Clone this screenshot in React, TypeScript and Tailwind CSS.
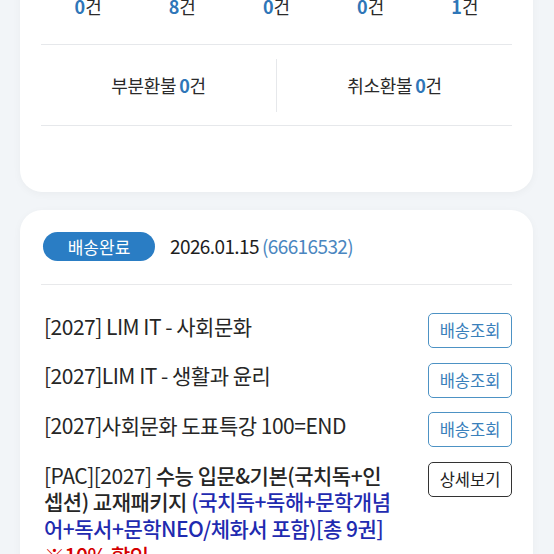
import React from "react";

const FONT = { fontFamily: '"Noto Sans CJK KR", "Noto Sans", sans-serif' };

const COUNTS = [
  { label: "입금대기", n: 0 },
  { label: "결제완료", n: 8 },
  { label: "배송준비", n: 0 },
  { label: "배송중", n: 0 },
  { label: "배송완료", n: 1 },
];

function TrackButton({ label, dark }: { label: string; dark?: boolean }) {
  return (
    <button
      type="button"
      className={
        dark
          ? "shrink-0 h-[35px] w-[84px] whitespace-nowrap rounded-[5px] border-[1.5px] border-[#333] bg-white text-[16.5px] leading-none text-[#222]"
          : "shrink-0 h-[35px] w-[84px] whitespace-nowrap rounded-[5px] border-[1.5px] border-[#4d92c4] bg-white text-[16.5px] leading-none text-[#3a80bb]"
      }
    >
      {label}
    </button>
  );
}

export default function App() {
  return (
    <div style={FONT} className="h-[554px] w-[554px] overflow-hidden bg-[#f2f5f8] text-[#222]">
      <div className="-mt-[48px] flex flex-col gap-[18px] pl-[20px] pr-[21px]">
        {/* summary card */}
        <div className="rounded-[22px] bg-white px-[21px] pt-[20px] pb-[66px] shadow-[0_2px_8px_rgba(0,0,0,0.04)]">
          <div className="grid grid-cols-5 text-center">
            {COUNTS.map((c) => (
              <div key={c.label} className="flex flex-col items-center">
                <span className="text-[15px] leading-[22px] text-[#555]">{c.label}</span>
                <span className="text-[18px] leading-[24px] text-[#2a2a2a]">
                  <b className="font-bold text-[#2f76b8]">{c.n}</b>건
                </span>
              </div>
            ))}
          </div>
          <div className="mt-[26px] h-px bg-[#e6e8eb]" />
          <div className="flex h-[80px] items-center">
            <div className="flex-1 text-center text-[18px] tracking-[-0.3px] text-[#2a2a2a]">
              부분환불<b className="ml-[3px] font-bold text-[#2f76b8]">0</b>건
            </div>
            <div className="h-[53px] w-px bg-[#e6e8eb]" />
            <div className="flex-1 text-center text-[18px] tracking-[-0.3px] text-[#2a2a2a]">
              취소환불<b className="ml-[3px] font-bold text-[#2f76b8]">0</b>건
            </div>
          </div>
          <div className="h-px bg-[#e6e8eb]" />
        </div>

        {/* order card */}
        <div className="rounded-[22px] bg-white px-[21px] pt-[22px] pb-[30px] shadow-[0_2px_8px_rgba(0,0,0,0.04)]">
          <div className="flex items-center">
            <span className="ml-[2px] flex h-[29px] w-[112px] items-center justify-center rounded-full bg-[#2a7dc4] text-[17px] text-white">
              배송완료
            </span>
            <span className="ml-[15px] text-[19px] tracking-[-0.6px] text-[#1e1e1e]">
              2026.01.15
              <span className="ml-[3px] text-[#4a86c0]">(66616532)</span>
            </span>
          </div>
          <div className="mt-[23px] h-px bg-[#e8e9eb]" />

          <div className="mt-[28px] flex flex-col gap-[14.5px]">
            <div className="flex items-center justify-between gap-3">
              <span className="-mt-[8px] pl-[3px] text-[21px] tracking-[-0.5px] text-[#262626]">[2027] LIM IT - 사회문화</span>
              <TrackButton label="배송조회" />
            </div>
            <div className="flex items-center justify-between gap-3">
              <span className="-mt-[8px] pl-[3px] text-[21px] tracking-[-0.5px] text-[#262626]">[2027]LIM IT - 생활과 윤리</span>
              <TrackButton label="배송조회" />
            </div>
            <div className="flex items-center justify-between gap-3">
              <span className="-mt-[8px] pl-[3px] text-[21px] tracking-[-0.5px] text-[#262626]">[2027]사회문화 도표특강 100=END</span>
              <TrackButton label="배송조회" />
            </div>
            <div className="flex items-start justify-between gap-3">
              <p className="pl-[3px] text-[21px] leading-[26.7px] tracking-[-0.5px] text-[#262626]">
                [PAC][2027] <span className="font-medium">수능 입문&amp;기본(국치독+인</span>
                <br />
                <span className="font-medium">셉션) 교재패키지 </span>
                <span className="font-medium text-[#1f2bb0]">(국치독+독해+문학개념</span>
                <br />
                <span className="font-medium text-[#1f2bb0]">어+독서+문학NEO/체화서 포함)[총 9권]</span>
                <br />
                <span className="font-medium text-[#d40000]">※10% 할인</span>
              </p>
              <TrackButton label="상세보기" dark />
            </div>
          </div>
        </div>
      </div>
    </div>
  );
}
